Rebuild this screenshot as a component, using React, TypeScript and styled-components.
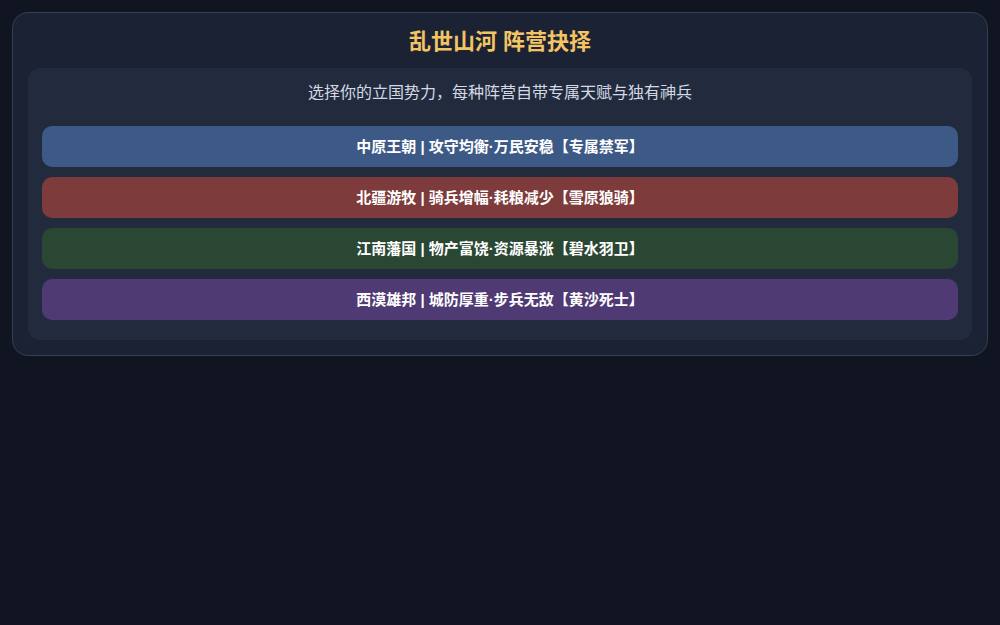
import * as React from 'react';
import styled, { createGlobalStyle } from 'styled-components';

const GlobalStyle = createGlobalStyle`
  html, body {
    margin: 0;
    padding: 0;
    background: #111522;
  }
  body {
    font-family: "Liberation Sans", "Noto Sans CJK KR", sans-serif;
  }
`;

const Page = styled.div`
  padding: 12px;
  min-height: 625px;
  box-sizing: border-box;
`;

const Card = styled.div`
  background: #1b2233;
  border: 1px solid #343e56;
  border-radius: 16px;
  padding: 15px;
`;

const Title = styled.h1`
  margin: 0 0 12px;
  text-align: center;
  color: #f3c463;
  font-size: 22px;
  font-weight: 700;
  line-height: 28px;
`;

const Panel = styled.div`
  background: #222b3e;
  border-radius: 12px;
  padding: 13px 14px 20px;
`;

const Subtitle = styled.p`
  margin: 0 0 21px;
  text-align: center;
  color: #d4d9e3;
  font-size: 16px;
  line-height: 24px;
`;

const List = styled.div`
  display: flex;
  flex-direction: column;
  gap: 10px;
`;

const FactionButton = styled.button<{ $bg: string }>`
  height: 41px;
  padding: 0 6px 2px;
  border: none;
  border-radius: 10px;
  background: ${p => p.$bg};
  color: #ffffff;
  font-family: inherit;
  font-size: 15px;
  font-weight: 700;
  cursor: pointer;
`;

const factions = [
  { text: '中原王朝 | 攻守均衡·万民安稳【专属禁军】', bg: '#3d5a87' },
  { text: '北疆游牧 | 骑兵增幅·耗粮减少【雪原狼骑】', bg: '#7d3b3b' },
  { text: '江南藩国 | 物产富饶·资源暴涨【碧水羽卫】', bg: '#2a4733' },
  { text: '西漠雄邦 | 城防厚重·步兵无敌【黄沙死士】', bg: '#4f3a73' },
];

const App = () => {
  return (
    <Page>
      <GlobalStyle />
      <Card>
        <Title>乱世山河 阵营抉择</Title>
        <Panel>
          <Subtitle>选择你的立国势力，每种阵营自带专属天赋与独有神兵</Subtitle>
          <List>
            {factions.map(f => (
              <FactionButton key={f.text} $bg={f.bg}>
                {f.text}
              </FactionButton>
            ))}
          </List>
        </Panel>
      </Card>
    </Page>
  );
};

export default App;
